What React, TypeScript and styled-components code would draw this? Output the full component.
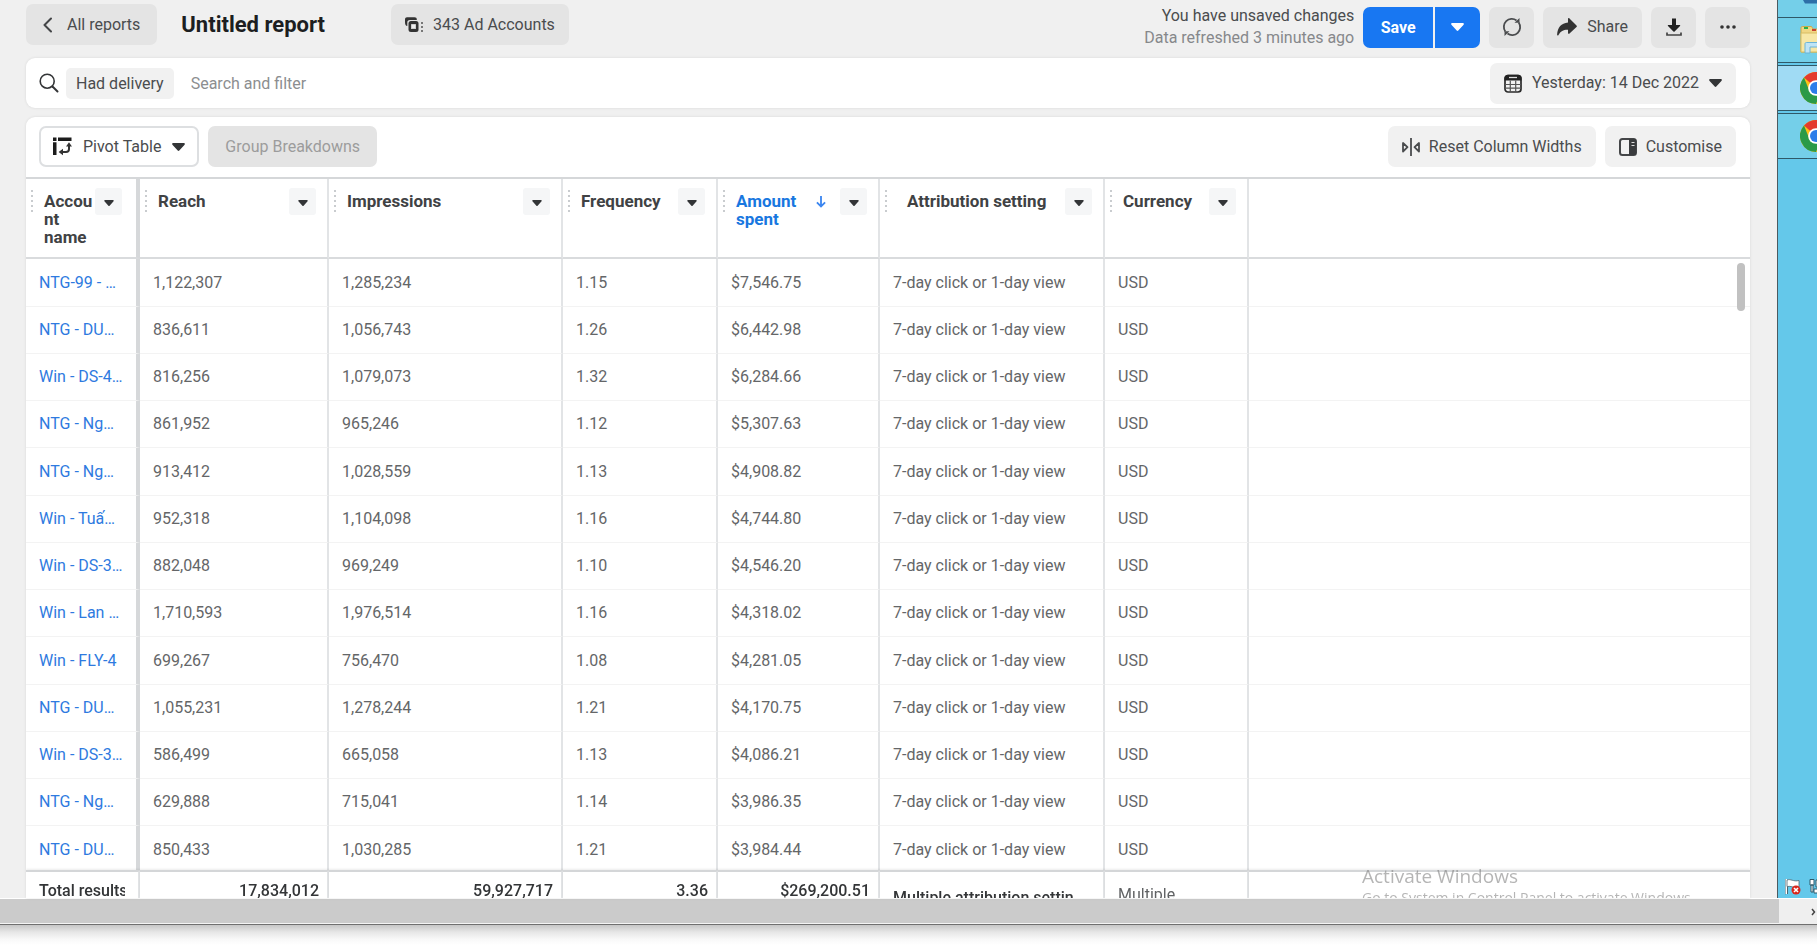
import React from 'react';
import styled, { createGlobalStyle } from 'styled-components';

const GlobalStyle = createGlobalStyle`
  *, *::before, *::after { box-sizing: border-box; }
  body { margin: 0; background: #fff; }
  button, input { font: inherit; color: inherit; }
`;

const Screen = styled.div`
  display: flex;
  flex-direction: column;
  height: 100vh;
  overflow: hidden;
  font-family: Roboto, 'Liberation Sans', sans-serif;
  font-size: 16px;
  color: #4a4c4e;
`;

const Desktop = styled.div`
  display: flex;
  flex: 1;
  min-height: 0;
  position: relative;
`;

const Browser = styled.main`
  display: flex;
  flex-direction: column;
  flex: 1;
  min-width: 0;
  padding: 0 27px 0 26px;
  background: #f0f0f0;
`;

const TopBar = styled.header`
  display: flex;
  align-items: flex-start;
  justify-content: space-between;
  height: 58px;
  padding-top: 4px;
  flex-shrink: 0;
`;

const TitleGroup = styled.div`
  display: flex;
  align-items: center;
`;

const ActionGroup = styled.div`
  display: flex;
  align-items: center;
  gap: 9px;
  padding-top: 1px;
`;

const Title = styled.h1`
  margin: 0 66px 0 24px;
  font-size: 22px;
  line-height: 28px;
  font-weight: 700;
  color: #1c1e21;
`;

const Status = styled.div`
  text-align: right;
  line-height: 22px;
  height: 44px;
`;

const StatusDetail = styled.div`
  color: #86888b;
`;

const Button = styled.button<{ $tone?: 'grey' | 'light' | 'outline' | 'off'; $pad?: number; $gap?: number }>`
  display: flex;
  align-items: center;
  justify-content: center;
  gap: ${p => p.$gap ?? 10}px;
  height: 41px;
  padding: 0 ${p => p.$pad ?? 14}px;
  border: ${p => (p.$tone === 'outline' ? '2px solid #dddfe1' : '0')};
  border-radius: 7px;
  background: ${p => (p.$tone === 'outline' ? '#fff' : p.$tone === 'light' ? '#f1f1f1' : '#e4e4e4')};
  color: ${p => (p.$tone === 'off' ? '#9c9c9c' : '#4a4c4e')};
  line-height: 20px;
  white-space: nowrap;
`;

const IconButton = styled(Button)`
  width: 45px;
  padding: 0;
`;

const SaveGroup = styled.div`
  display: flex;
  gap: 2px;
`;

const SaveButton = styled.button<{ $side: 'left' | 'right' }>`
  display: flex;
  align-items: center;
  justify-content: center;
  width: ${p => (p.$side === 'left' ? 70 : 45)}px;
  height: 41px;
  padding: 0;
  border: 0;
  border-radius: ${p => (p.$side === 'left' ? '7px 0 0 7px' : '0 7px 7px 0')};
  background: #1877f2;
  color: #fff;
  font-weight: 700;
`;

const SearchBar = styled.section`
  display: flex;
  align-items: center;
  height: 50px;
  flex-shrink: 0;
  margin-bottom: 9px;
  padding: 0 14px 0 13px;
  border-radius: 9px;
  background: #fff;
  box-shadow: 0 0 3px rgba(0, 0, 0, 0.1);
`;

const Chip = styled.button`
  height: 31px;
  margin-left: 7px;
  padding: 0 10px;
  border: 0;
  border-radius: 5px;
  background: #f1f1f1;
`;

const SearchInput = styled.input`
  flex: 1;
  min-width: 0;
  padding: 0 17px;
  border: 0;
  outline: 0;
  background: transparent;
  &::placeholder { color: #8c8e90; opacity: 1; }
`;

const Card = styled.section`
  display: flex;
  flex-direction: column;
  flex: 1;
  min-height: 0;
  position: relative;
  border-radius: 9px 9px 0 0;
  background: #fff;
  box-shadow: 0 0 3px rgba(0, 0, 0, 0.1);
`;

const Toolbar = styled.div`
  display: flex;
  justify-content: space-between;
  flex-shrink: 0;
  height: 60px;
  padding: 9px 14px 0 13px;
`;

const ToolGroup = styled.div`
  display: flex;
  gap: 9px;
`;

const TableArea = styled.div`
  flex: 1;
  min-height: 0;
  overflow: hidden;
  border-top: 2px solid #d5d7d9;
`;

const Table = styled.table`
  width: 100%;
  table-layout: fixed;
  border-collapse: separate;
  border-spacing: 0;
  text-align: left;
`;

const Col = styled.col<{ $width?: number }>`
  width: ${p => (p.$width ? `${p.$width}px` : 'auto')};
`;

const HeadCell = styled.th<{ $first?: boolean }>`
  height: 80px;
  padding: 9px ${p => (p.$first ? 14 : 11)}px 0 5px;
  vertical-align: top;
  border-bottom: 2px solid #d9dbdd;
  border-right: ${p => (p.$first ? 4 : 2)}px solid ${p => (p.$first ? '#d6d8da' : '#e2e4e6')};
  &:last-child { border-right: 0; }
`;

const HeadInner = styled.div`
  display: flex;
  align-items: flex-start;
`;

const Grip = styled.span`
  width: 2px;
  height: 22px;
  margin: 2px 11px 0 0;
  flex-shrink: 0;
  background: repeating-linear-gradient(to bottom, #c9cccf 0 2px, transparent 2px 5px);
`;

const HeadLabel = styled.span<{ $sorted?: boolean; $indent?: boolean }>`
  flex: 1;
  min-width: 0;
  padding: 4px 0 0 ${p => (p.$indent ? 9 : 0)}px;
  font-size: 17px;
  line-height: 18px;
  font-weight: 700;
  overflow-wrap: anywhere;
  color: ${p => (p.$sorted ? '#1877e0' : '#404244')};
`;

const SortIcon = styled.svg`
  margin: 7px 14px 0 0;
  flex-shrink: 0;
`;

const HeadMenu = styled.button`
  display: flex;
  align-items: center;
  justify-content: center;
  width: 27px;
  height: 27px;
  flex-shrink: 0;
  padding: 2px 0 0;
  border: 0;
  border-radius: 3px;
  background: #f5f6f7;
`;

const Row = styled.tr`
  height: 47px;
  &:nth-child(4n + 1) { height: 48px; }
`;

const Cell = styled.td<{ $first?: boolean }>`
  padding: ${p => (p.$first ? '0 8px 0 13px' : '0 13px')};
  border-bottom: 1px solid #f3f3f3;
  border-right: ${p => (p.$first ? 4 : 2)}px solid ${p => (p.$first ? '#d6d8da' : '#e2e4e6')};
  color: #646668;
  line-height: 20px;
  white-space: nowrap;
  overflow: hidden;
  &:last-child { border-right: 0; }
`;

const AccountLink = styled.a`
  color: #2e7ae0;
  text-decoration: none;
`;

const TotalCell = styled.td<{ $right?: boolean; $first?: boolean }>`
  position: sticky;
  bottom: 0;
  padding: 0 ${p => (p.$right ? 8 : 13)}px 0 13px;
  border-top: 2px solid #d4d6d8;
  border-right: 2px solid #e2e4e6;
  background: #fff;
  box-shadow: 0 -1px 2px rgba(0, 0, 0, 0.08);
  text-align: ${p => (p.$right ? 'right' : 'left')};
  &:last-child { border-right: 0; }
`;

const TotalText = styled.div<{ $low?: boolean; $plain?: boolean }>`
  height: 26px;
  padding-top: ${p => (p.$low ? (p.$plain ? 13 : 16) : 9)}px;
  line-height: 20px;
  overflow: hidden;
  white-space: nowrap;
  font-weight: ${p => (p.$plain ? 400 : 500)};
  color: ${p => (p.$plain ? '#606264' : '#333537')};
`;

const ScrollThumb = styled.div`
  position: absolute;
  top: 146px;
  right: 5px;
  width: 8px;
  height: 48px;
  border-radius: 4px;
  background: #c1c1c1;
`;

const Watermark = styled.div`
  position: absolute;
  right: 80px;
  bottom: -10px;
  width: 375px;
  font-family: 'Open Sans', 'Noto Sans', sans-serif;
  font-size: 14px;
  line-height: 20px;
  color: rgba(120, 120, 120, 0.55);
  pointer-events: none;
`;

const WatermarkTitle = styled.div`
  font-size: 19px;
  line-height: 24px;
`;

const WatermarkClip = styled.div`
  position: absolute;
  inset: 0;
  overflow: hidden;
  pointer-events: none;
`;

const Taskbar = styled.aside`
  display: flex;
  flex-direction: column;
  width: 40px;
  flex-shrink: 0;
  overflow: hidden;
  border-left: 1px solid #4c5a60;
  background: #64c8ea;
`;

const Task = styled.button<{ $active?: boolean; $cut?: boolean }>`
  display: flex;
  align-items: ${p => (p.$cut ? 'flex-start' : 'center')};
  flex-shrink: 0;
  width: 60px;
  height: ${p => (p.$cut ? 17 : 46)}px;
  margin-bottom: ${p => (p.$cut ? 0 : 2)}px;
  padding: 0 0 0 ${p => (p.$cut ? 25 : 22)}px;
  border: 0 solid #2f5968;
  border-width: ${p => (p.$cut ? '0' : '1px 0')};
  background: ${p => (p.$active ? '#a0dbf4' : '#74cfe9')};
`;

const Tray = styled.div`
  display: flex;
  gap: 8px;
  width: 60px;
  margin-top: auto;
  padding: 0 0 3px 7px;
`;

const HScroll = styled.div`
  display: flex;
  flex-shrink: 0;
  height: 27px;
  border-top: 1px solid #fff;
  border-bottom: 1px solid #6f6f6f;
  background: #efefef;
`;

const HThumb = styled.div`
  flex: 1;
  background: #cbcbcb;
  border-bottom: 1px solid #f4f4f4;
`;

const HArrow = styled.button`
  display: flex;
  align-items: center;
  width: 38px;
  padding: 0 0 0 32px;
  border: 0;
  background: transparent;
  overflow: hidden;
`;

const Shade = styled.div`
  flex-shrink: 0;
  height: 20px;
  background: linear-gradient(#c6c6c6, #e6e6e6 35%, #f8f8f8 70%, #fff);
`;

const Caret = ({ size = 13, color = '#333537' }: { size?: number; color?: string }) => (
  <svg width={size} height={size === 13 ? 8 : 6} viewBox="0 0 13 8" fill={color} aria-hidden="true">
    <path d="M1.2 0h10.6c.9 0 1.4 1 .8 1.700L7.300 7.500c-.4.500-1.200.500-1.600 0L.4 1.700C-.2 1 .3 0 1.200 0z" />
  </svg>
);

const ChevronLeft = () => (
  <svg width="9" height="16" viewBox="0 0 9 16" fill="none" stroke="#444648" strokeWidth="2" strokeLinecap="round" strokeLinejoin="round" aria-hidden="true">
    <path d="M8 1.500 1.500 8 8 14.500" />
  </svg>
);

const AccountsIcon = () => (
  <svg width="18" height="16" viewBox="0 0 18 16" aria-hidden="true">
    <path d="M0 5V2.500C0 1 .9.300 2 .300h7.500C11 .300 11.800 1 11.800 2.500v.500H5C3 3 2.300 4 2.300 5.500V9C.8 9 0 7.500 0 5z" fill="#333" />
    <rect x="3.500" y="4" width="10" height="11" rx="2.500" fill="#333" />
    <rect x="6" y="7" width="5" height="5" rx=".5" fill="#cfcfcf" />
    <path d="M7 8h3v3H7z" fill="#eee" />
    <path d="M16 5h2v2h-2zM16 9h2v2h-2zM16 13h2v2h-2z" fill="#777" />
  </svg>
);

const RefreshIcon = () => (
  <svg width="20" height="20" viewBox="0 0 20 20" fill="none" stroke="#4a4c4e" strokeWidth="1.800" aria-hidden="true">
    <path d="M3.300 14.500A8 8 0 0 1 14.500 3.400" />
    <path d="M16.700 5.500A8 8 0 0 1 5.500 16.600" />
    <path d="M12.500 5.800h5V1z M7.500 14.200h-5V19z" fill="#4a4c4e" stroke="none" />
  </svg>
);

const ShareIcon = () => (
  <svg width="20" height="18" viewBox="0 0 20 18" fill="#333" aria-hidden="true">
    <path d="M11 .800c0-.8.900-1 1.500-.400l7 7c.500.500.500 1 0 1.500l-7 6.700c-.600.600-1.500.300-1.500-.500v-3.400c-4.500-.200-7.200 1.200-9.500 5.300-.5.900-1.500.700-1.400-.4C.600 9.500 4.200 5.200 11 4.600z" />
  </svg>
);

const DownloadIcon = () => (
  <svg width="16" height="19" viewBox="0 0 16 19" fill="#222" aria-hidden="true">
    <path d="M6 .500h4v6.500h3.600c.6 0 .8.600.4 1L8.600 13.600c-.3.300-.8.300-1.200 0L2 8c-.4-.400-.2-1 .4-1H6z" />
    <path d="M1 14.500v2.500h14v-2.500" fill="none" stroke="#444" strokeWidth="1.700" />
  </svg>
);

const DotsIcon = () => (
  <svg width="16" height="4" viewBox="0 0 16 4" fill="#333" aria-hidden="true">
    <circle cx="2" cy="2" r="1.800" /><circle cx="8" cy="2" r="1.800" /><circle cx="14" cy="2" r="1.800" />
  </svg>
);

const SearchIcon = () => (
  <svg width="20" height="20" viewBox="0 0 20 20" fill="none" stroke="#333537" strokeWidth="1.600" strokeLinecap="round" aria-hidden="true">
    <circle cx="8.200" cy="8.200" r="7" /><path d="m13.500 13.500 5 5" strokeWidth="2" />
  </svg>
);

const CalendarIcon = () => (
  <svg width="18" height="19" viewBox="0 0 18 19" aria-hidden="true">
    <rect x="1" y="1.500" width="16" height="16.500" rx="3" fill="none" stroke="#2b2b2b" strokeWidth="1.700" />
    <path d="M.5 6.500V4C.5 2 2 .700 4 .700h10c2 0 3.500 1.300 3.500 3.300v2.500z" fill="#222" />
    <path d="M5 3.500h8" stroke="#ddd" strokeWidth="1.300" />
    <path d="M6.300 6.500V18M11.700 6.500V18M1 10.500h16M1 14.200h16" stroke="#555" strokeWidth="1.200" />
  </svg>
);

const PivotIcon = () => (
  <svg width="19" height="19" viewBox="0 0 19 19" aria-hidden="true">
    <path d="M0 .500h3.500V4H0zM5 .500h13.500V4H5zM0 5.300h3.500V18H0z" fill="#1c1c1c" />
    <path d="M16 8v4c0 2.300-1 3-3 3H8.500" fill="none" stroke="#333" strokeWidth="2" />
    <path d="M16 5.200 19 9.400h-6zM5.600 15 10 11.700v6.600z" fill="#333" />
  </svg>
);

const ResetWidthIcon = () => (
  <svg width="18" height="18" viewBox="0 0 18 18" fill="none" stroke="#4a4c4e" strokeWidth="1.800" strokeLinejoin="round" aria-hidden="true">
    <path d="M9 0v18M1 5v8.500L5.500 9.200zM17 5v8.500l-4.500-4.300z" />
  </svg>
);

const PanelIcon = () => (
  <svg width="18" height="18" viewBox="0 0 18 18" aria-hidden="true">
    <rect x="1" y="1" width="16" height="16" rx="2.500" fill="none" stroke="#444648" strokeWidth="2" />
    <path d="M10 1h5.500c1 0 1.500.500 1.500 1.500v13c0 1-.5 1.500-1.500 1.500H10z" fill="#3a3c3e" />
    <path d="M12.500 4.500h3M12.500 7.500h3" stroke="#ddd" strokeWidth="1.200" />
  </svg>
);

const ChromeIcon = () => (
  <svg width="32" height="32" viewBox="0 0 32 32" aria-hidden="true">
    <circle cx="16" cy="16" r="16" fill="#fbc116" />
    <path d="M16 16 4 5.500A16 16 0 0 1 29.900 8z" fill="#e33b2e" />
    <path d="M4 5.500a16 16 0 0 0 12 26.500l4-10L9 18z" fill="#2a9a48" />
    <circle cx="16" cy="16" r="7.800" fill="#fff" />
    <circle cx="16" cy="16" r="6" fill="#2b7de9" />
  </svg>
);

const FolderIcon = () => (
  <svg width="34" height="30" viewBox="0 0 34 30" aria-hidden="true">
    <path d="M1 3c0-1 .5-1.500 1.500-1.500h9L13 4h19v23H1z" fill="#f0d683" stroke="#c9a94b" />
    <path d="M4 2h4v2H4z" fill="#2ab04a" /><path d="M12 4h4v2h-4z" fill="#c9432f" />
    <path d="M1 8h31v19H1z" fill="#f7e7a6" stroke="#d8bd62" />
    <path d="M5 28V19c0-1 .5-1.500 1.500-1.500H28V22H10v6z" fill="#bfe4f5" stroke="#6bb4d8" />
  </svg>
);

const FlagIcon = () => (
  <svg width="16" height="17" viewBox="0 0 16 17" aria-hidden="true">
    <path d="M1 1v15" stroke="#fff" strokeWidth="2" /><path d="M0 1v15.500M2.500 9v7" stroke="#4d6570" />
    <path d="M2 2c4-1.500 6 2 12 .500V9c-5 1.500-8-1.500-12-.5z" fill="#fff" stroke="#4d6570" strokeWidth=".8" />
    <circle cx="11" cy="12" r="4.500" fill="#d9261c" /><path d="m9 10 4 4m0-4-4 4" stroke="#fff" strokeWidth="1.600" />
  </svg>
);

const PlugIcon = () => (
  <svg width="16" height="17" viewBox="0 0 16 17" fill="#fff" stroke="#2f5968" aria-hidden="true">
    <path d="M1 1.500h4V7H1zM2 7h2v7H2zM7 2h8v7H7zM5 11h6v4H5z" />
  </svg>
);

type Column = { label: string; width: number; sorted?: boolean; indent?: boolean };
const columns: Column[] = [
  { label: 'Account name', width: 114 },
  { label: 'Reach', width: 189 },
  { label: 'Impressions', width: 234 },
  { label: 'Frequency', width: 155 },
  { label: 'Amount spent', width: 162, sorted: true },
  { label: 'Attribution setting', width: 225, indent: true },
  { label: 'Currency', width: 144 },
];

const rows: string[][] = [
  ['NTG-99 - …', '1,122,307', '1,285,234', '1.15', '$7,546.75'],
  ['NTG - DU…', '836,611', '1,056,743', '1.26', '$6,442.98'],
  ['Win - DS-4…', '816,256', '1,079,073', '1.32', '$6,284.66'],
  ['NTG - Ng…', '861,952', '965,246', '1.12', '$5,307.63'],
  ['NTG - Ng…', '913,412', '1,028,559', '1.13', '$4,908.82'],
  ['Win - Tuấ…', '952,318', '1,104,098', '1.16', '$4,744.80'],
  ['Win - DS-3…', '882,048', '969,249', '1.10', '$4,546.20'],
  ['Win - Lan …', '1,710,593', '1,976,514', '1.16', '$4,318.02'],
  ['Win - FLY-4', '699,267', '756,470', '1.08', '$4,281.05'],
  ['NTG - DU…', '1,055,231', '1,278,244', '1.21', '$4,170.75'],
  ['Win - DS-3…', '586,499', '665,058', '1.13', '$4,086.21'],
  ['NTG - Ng…', '629,888', '715,041', '1.14', '$3,986.35'],
  ['NTG - DU…', '850,433', '1,030,285', '1.21', '$3,984.44'],
];

export default function App() {
  return (
    <Screen>
      <GlobalStyle />
      <Desktop>
        <Browser>
          <TopBar>
            <TitleGroup>
              <Button $pad={17} $gap={15}><ChevronLeft />All reports</Button>
              <Title>Untitled report</Title>
              <Button><AccountsIcon />343 Ad Accounts</Button>
            </TitleGroup>
            <ActionGroup>
              <Status>
                <div>You have unsaved changes</div>
                <StatusDetail>Data refreshed 3 minutes ago</StatusDetail>
              </Status>
              <SaveGroup>
                <SaveButton $side="left">Save</SaveButton>
                <SaveButton $side="right" aria-label="More save options"><Caret color="#fff" /></SaveButton>
              </SaveGroup>
              <IconButton aria-label="Refresh"><RefreshIcon /></IconButton>
              <Button><ShareIcon />Share</Button>
              <IconButton aria-label="Download"><DownloadIcon /></IconButton>
              <IconButton aria-label="More"><DotsIcon /></IconButton>
            </ActionGroup>
          </TopBar>

          <SearchBar>
            <SearchIcon />
            <Chip>Had delivery</Chip>
            <SearchInput placeholder="Search and filter" aria-label="Search and filter" />
            <Button $tone="light"><CalendarIcon />Yesterday: 14 Dec 2022<Caret /></Button>
          </SearchBar>

          <Card>
            <Toolbar>
              <ToolGroup>
                <Button $tone="outline" $pad={12} $gap={11}><PivotIcon />Pivot Table<Caret /></Button>
                <Button $tone="off" $pad={17} disabled>Group Breakdowns</Button>
              </ToolGroup>
              <ToolGroup>
                <Button $tone="light" $gap={9}><ResetWidthIcon />Reset Column Widths</Button>
                <Button $tone="light" $gap={9}><PanelIcon />Customise</Button>
              </ToolGroup>
            </Toolbar>
            <TableArea>
              <Table>
                <colgroup>
                  {columns.map(c => <Col key={c.label} $width={c.width} />)}
                  <Col />
                </colgroup>
                <thead>
                  <tr>
                    {columns.map((c, i) => (
                      <HeadCell key={c.label} $first={i === 0} scope="col">
                        <HeadInner>
                          <Grip />
                          <HeadLabel $sorted={c.sorted} $indent={c.indent}>{c.label}</HeadLabel>
                          {c.sorted && (
                            <SortIcon width="10" height="13" viewBox="0 0 11 14" fill="none" stroke="#3b86f0" strokeWidth="2" aria-hidden="true">
                              <path d="M5.500 1v11M1 8l4.500 4.500L10 8" />
                            </SortIcon>
                          )}
                          <HeadMenu aria-label={`${c.label} options`}><Caret size={10} /></HeadMenu>
                        </HeadInner>
                      </HeadCell>
                    ))}
                    <HeadCell as="td" />
                  </tr>
                </thead>
                <tbody>
                  {rows.map(([name, ...values], i) => (
                    <Row key={i}>
                      <Cell $first><AccountLink href="#">{name}</AccountLink></Cell>
                      {values.map((v, j) => <Cell key={j}>{v}</Cell>)}
                      <Cell>7-day click or 1-day view</Cell>
                      <Cell>USD</Cell>
                      <Cell />
                    </Row>
                  ))}
                </tbody>
                <tfoot>
                  <tr>
                    <TotalCell $first><TotalText>Total results</TotalText></TotalCell>
                    <TotalCell $right><TotalText>17,834,012</TotalText></TotalCell>
                    <TotalCell $right><TotalText>59,927,717</TotalText></TotalCell>
                    <TotalCell $right><TotalText>3.36</TotalText></TotalCell>
                    <TotalCell $right><TotalText>$269,200.51</TotalText></TotalCell>
                    <TotalCell><TotalText $low>Multiple attribution settin</TotalText></TotalCell>
                    <TotalCell><TotalText $low $plain>Multiple</TotalText></TotalCell>
                    <TotalCell />
                  </tr>
                </tfoot>
              </Table>
            </TableArea>
            <ScrollThumb />
          </Card>
        </Browser>
        <WatermarkClip>
          <Watermark>
            <WatermarkTitle>Activate Windows</WatermarkTitle>
            Go to System in Control Panel to activate Windows
          </Watermark>
        </WatermarkClip>
        <Taskbar>
          <Task $cut aria-label="Server Manager">
            <svg width="20" height="4" viewBox="0 0 20 4" aria-hidden="true"><path d="M0 0h20v3.500H2z" fill="#2d6fa8" /></svg>
          </Task>
          <Task aria-label="File Explorer"><FolderIcon /></Task>
          <Task $active aria-label="Chrome"><ChromeIcon /></Task>
          <Task aria-label="Chrome, second window"><ChromeIcon /></Task>
          <Tray><FlagIcon /><PlugIcon /></Tray>
        </Taskbar>
      </Desktop>
      <HScroll>
        <HThumb />
        <HArrow aria-label="Scroll right">
          <svg width="12" height="12" viewBox="0 0 12 12" fill="none" stroke="#444" strokeWidth="3" aria-hidden="true"><path d="m2 0 5 6-5 6" /></svg>
        </HArrow>
      </HScroll>
      <Shade />
    </Screen>
  );
}
